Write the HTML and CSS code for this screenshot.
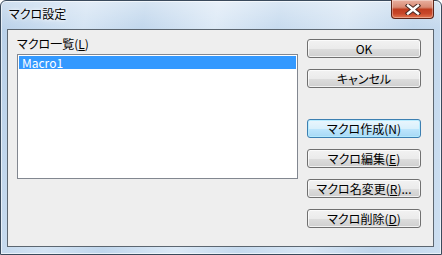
FILE: index.html
```html
<!DOCTYPE html>
<html lang="ja">
<head>
<meta charset="utf-8">
<link rel="stylesheet" href="styles.css">
</head>
<body>
<div class="window">
  <div class="titlebar">
    <span class="title">マクロ設定</span>
    <div class="close">
      <svg width="16" height="11" viewBox="0 0 16 11">
        <path d="M3 1.5 L13 9.5 M13 1.5 L3 9.5" stroke="#4b2a24" stroke-width="4.4" stroke-linecap="square" fill="none"/>
        <path d="M3 1.5 L13 9.5 M13 1.5 L3 9.5" stroke="#ffffff" stroke-width="2.4" stroke-linecap="square" fill="none"/>
      </svg>
    </div>
  </div>
  <div class="client">
    <div class="left">
      <div class="label">マクロ一覧(<u>L</u>)</div>
      <div class="listbox">
        <div class="item selected">Macro1</div>
      </div>
    </div>
    <div class="right">
      <button class="btn b-ok">OK</button>
      <button class="btn b-cancel">キャンセル</button>
      <button class="btn b-new default">マクロ作成(N)</button>
      <button class="btn b-edit">マクロ編集(<u>E</u>)</button>
      <button class="btn b-rename">マクロ名変更(<u>R</u>)...</button>
      <button class="btn b-del">マクロ削除(<u>D</u>)</button>
    </div>
  </div>
</div>
</body>
</html>
```

FILE: styles.css
```css
html, body {
  margin: 0;
  padding: 0;
  width: 442px;
  height: 255px;
  overflow: hidden;
  background: #ffffff;
}

.window {
  box-sizing: border-box;
  width: 442px;
  height: 255px;
  border: 1px solid #3a4a5c;
  border-radius: 6px 6px 0 0;
  background:
    linear-gradient(to bottom, rgba(255,255,255,0.35), rgba(255,255,255,0) 30px),
    linear-gradient(100deg, #b7cfe8 0%, #d3e3f3 18%, #c0d6ec 30%, #dce9f6 45%, #c6daee 58%, #d8e6f4 72%, #bfd5eb 86%, #cddff1 100%);
  box-shadow: inset 0 0 0 1px rgba(255,255,255,0.6);
  display: flex;
  flex-direction: column;
  font-family: "Noto Sans CJK JP", "Noto Sans", sans-serif;
  font-feature-settings: "palt";
}

.titlebar {
  height: 28px;
  position: relative;
  display: flex;
  align-items: flex-start;
}

.title {
  margin: 5px 0 0 8px;
  font-size: 12px;
  line-height: 16px;
  color: #000;
  text-shadow: 0 0 6px #fff, 0 0 3px #fff;
}

.close {
  position: absolute;
  top: -1px;
  right: 7px;
  width: 43px;
  height: 19px;
  box-sizing: border-box;
  border: 1px solid #5d2519;
  border-top: none;
  border-radius: 0 0 4px 4px;
  background: linear-gradient(to bottom, #eab0a0 0%, #d88a74 40%, #bf3d20 52%, #c8472a 75%, #e27650 100%);
  box-shadow: inset 0 0 0 1px rgba(255,255,255,0.35);
  display: flex;
  align-items: center;
  justify-content: center;
}

.client {
  box-sizing: border-box;
  margin: 0 7px 7px 6px;
  flex: 1;
  border: 1px solid #5c6670;
  background: #eeeeee;
  display: flex;
  padding: 0 0 0 9px;
  gap: 9px;
}

.left {
  width: 281px;
  display: flex;
  flex-direction: column;
}

.label {
  height: 18px;
  padding-top: 6px;
  font-size: 12px;
  line-height: 16px;
  color: #000;
}

.label u, .btn u {
  text-decoration-thickness: 1px;
  text-underline-offset: 1px;
}

.listbox {
  box-sizing: border-box;
  height: 125px;
  border: 1px solid #828790;
  background: #ffffff;
  padding: 1px;
}

.item {
  height: 13px;
  font-size: 12px;
  line-height: 13px;
  padding-left: 3px;
}

.selected {
  background: #3399ff;
  color: #ffffff;
}

.right {
  width: 114px;
  display: flex;
  flex-direction: column;
}

.btn {
  box-sizing: border-box;
  width: 114px;
  height: 19px;
  padding: 0;
  border: 1px solid #707070;
  border-radius: 3px;
  background: linear-gradient(to bottom, #f2f2f2 0%, #ebebeb 50%, #dddddd 51%, #cfcfcf 100%);
  box-shadow: inset 0 0 0 1px rgba(255,255,255,0.7);
  font-family: "Noto Sans CJK JP", "Noto Sans", sans-serif;
  font-feature-settings: "palt";
  font-size: 12px;
  line-height: 15px;
  color: #000;
  text-align: center;
}

.default {
  border-color: #3c7fb1;
  background: linear-gradient(to bottom, #eaf6fd 0%, #d9f0fc 50%, #bee6fd 51%, #a7d9f5 100%);
  box-shadow: inset 0 0 0 1px rgba(180,235,255,0.9);
}

.b-ok { margin-top: 9px; }
.b-cancel { margin-top: 11px; }
.b-new { margin-top: 31px; }
.b-edit { margin-top: 11px; }
.b-rename { margin-top: 11px; }
.b-del { margin-top: 11px; }
```
